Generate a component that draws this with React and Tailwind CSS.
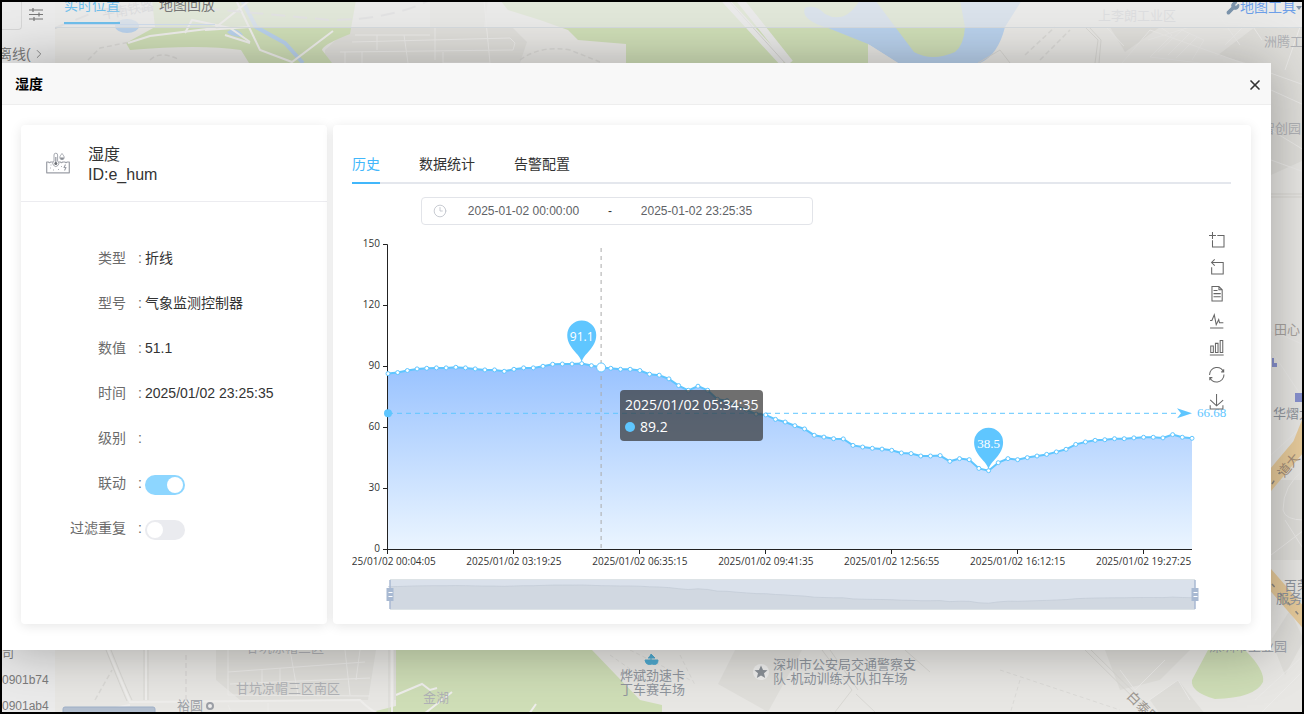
import React, { useState } from 'react';
import { ChevronRight, Clock3, X, Wrench } from 'lucide-react';

const BLUE = '#5fc6ff';

const HISTORY = [
  86.2, 86.7, 87.7, 88.5, 88.8, 89, 89, 89.3, 89, 88.5, 88, 88, 87.3, 88.3, 89, 89, 89.8, 90.8,
  90.9, 90.9, 91.1, 90.1, 89.2, 88.8, 88.3, 88.3, 87.7, 85.9, 85.4, 83.6, 80.3, 78, 80, 78, 73.6,
  72.9, 70.3, 68.3, 66.3, 65.9, 63.7, 62.4, 60.6, 59, 55.9, 55, 54.2, 54.1, 50.9, 50.1, 49.5, 49.1,
  48.5, 47.2, 46.9, 45.7, 45.7, 45.9, 43.1, 44.4, 43.9, 39.6, 38.5, 42.4, 44.4, 43.9, 44.9, 45.7,
  46.5, 47.7, 49, 51.4, 52.6, 53.4, 53.7, 54.2, 54.2, 54.6, 54.9, 54.9, 54.6, 56.2, 54.9, 54.4,
];

const TIME_TICKS = [
  '2025/01/02 00:04:05',
  '2025/01/02 03:19:25',
  '2025/01/02 06:35:15',
  '2025/01/02 09:41:35',
  '2025/01/02 12:56:55',
  '2025/01/02 16:12:15',
  '2025/01/02 19:27:25',
];

const AVERAGE = 66.68;
const ACTIVE = 22;

const TOOLS = [
  { name: '区域缩放', d: 'M0,13.5h26.9 M13.5,26.9V0 M32.1,13.5H58V58H13.5 V32.1' },
  { name: '区域缩放还原', d: 'M22,1.4L9.9,13.5l12.3,12.3 M10.3,13.5H54.9v44.6 H10.3v-26' },
  {
    name: '数据视图',
    d: 'M17.5,17.3H33 M45.4,29.5h-28 M11.5,2v56H51V14.8L38.4,2H11.5z M38.4,2.2v12.7H51 M45.4,41.7h-28',
  },
  { name: '切换为折线图', d: 'M4.1,28.9h7.1l9.3-22l7.4,38l9.7-19.7l3,12.8h14.9M4.1,58h51.4' },
  {
    name: '切换为柱状图',
    d: 'M6.7,22.9h10V48h-10V22.9zM24.9,13h10v35h-10V13zM43.2,2h10v46h-10V2zM3.1,58h53.7',
  },
  {
    name: '还原',
    d: 'M47,18.9h9.8V8.7 M56.3,20.1 C52.1,9,40.5,0.6,26.8,2.1C12.6,3.7,1.6,16.2,2.1,30.6 M13,41.1H3.1v10.2 M3.7,39.9c4.2,11.1,15.8,19.5,29.5,18 c14.2-1.6,25.2-14.1,24.7-28.5',
  },
  {
    name: '保存为图片',
    d: 'M4.7,22.9L29.3,45.5L54.7,23.4M4.6,43.6L4.6,58L53.8,58L53.8,43.6M29.2,45.1L29.2,0',
  },
];

// chart space: plot runs from x 36 to 840, zero line at y 324
const px = (i) => 36 + (i * 804) / (HISTORY.length - 1);
const py = (v) => 324 - v * 2.035;
const sy = (v) => 360 + (91.1 - v) * 0.346;

const toLine = (fy) => HISTORY.map((v, i) => `${px(i).toFixed(1)},${fy(v).toFixed(1)}`).join(' ');

const Pin = ({ index, serif }) => {
  const x = px(index);
  const y = py(HISTORY[index]);
  return (
    <g transform={`translate(${x} ${y})`}>
      <path d="M0 -1C-1.5 -10 -14.5 -15 -14.5 -28.500A14.500 14.500 0 0 1 14.500 -28.500C14.500 -15 1.500 -10 0 -1Z" fill={BLUE} />
      <text
        y="-23"
        textAnchor="middle"
        fill="#fff"
        className={serif ? "text-[13px] font-['Liberation_Serif',serif]" : "text-[12px] font-['Open_Sans',sans-serif]"}
      >
        {HISTORY[index]}
      </text>
    </g>
  );
};

const HistoryChart = () => {
  const line = toLine(py);
  const shadow = toLine(sy);

  return (
    <div className="relative">
      <svg viewBox="0 0 879 392" className="block w-full h-auto font-['Open_Sans',sans-serif]">
        <defs>
          <linearGradient id="humArea" x1="0" y1="0" x2="0" y2="1">
            <stop offset="0" stopColor="#98c2ff" />
            <stop offset="1" stopColor="#ebf5ff" />
          </linearGradient>
        </defs>

        <polygon points={`36,324 ${line} 840,324`} fill="url(#humArea)" />

        {/* Axes */}
        <g stroke="#222" fill="none">
          <path d="M35.500 19.500V324.500H840" />
          {[0, 30, 60, 90, 120, 150].map((v) => (
            <path key={v} d={`M31 ${Math.round(py(v)) + 0.5}h4.500`} />
          ))}
          {TIME_TICKS.map((t, i) => (
            <path key={t} d={`M${Math.round(px(i * 13)) - 0.5} 324v5`} />
          ))}
        </g>
        <g fill="#333" className="text-[10px]">
          {[0, 30, 60, 90, 120, 150].map((v) => (
            <text key={v} x="28" y={py(v) + 3} textAnchor="end">{v}</text>
          ))}
          {TIME_TICKS.map((t, i) => (
            <text key={t} x={px(i * 13)} y="340" textAnchor="middle">{t}</text>
          ))}
        </g>

        <path d={`M${px(ACTIVE)} 23V324`} stroke="#aaa" strokeDasharray="4 4" />

        {/* Series */}
        <polyline points={line} fill="none" stroke={BLUE} strokeWidth="2" />
        {HISTORY.map((v, i) => (
          <circle
            key={i}
            cx={px(i)}
            cy={py(v)}
            r={i === ACTIVE ? 4.5 : 2}
            fill="#fff"
            stroke={BLUE}
            strokeWidth="1"
          />
        ))}

        {/* Average */}
        <path d={`M36 ${py(AVERAGE)}H826`} stroke={BLUE} strokeDasharray="5 4" />
        <circle cx="36" cy={py(AVERAGE)} r="4" fill={BLUE} />
        <path d={`M840 ${py(AVERAGE)}l-15 -5l4 5l-4 5z`} fill={BLUE} />
        <text x="845" y={py(AVERAGE) + 4} fill={BLUE} className="text-[13px] font-['Liberation_Serif',serif]">
          {AVERAGE}
        </text>

        <Pin index={20} />
        <Pin index={62} serif />

        {/* Zoom slider */}
        <rect x="38" y="355" width="805" height="29" fill="#dae1eb" />
        <polygon points={`38,384 38,361.700 ${shadow} 843,372.700 843,384`} fill="#d1d8e1" />
        <polyline points={shadow} fill="none" stroke="#c1cad6" strokeWidth="0.7" />
        <path d="M38 354.500H843M38 384.500H843" stroke="#dde3e6" />
        {[38, 843].map((x) => (
          <g key={x} transform={`translate(${x} 355)`}>
            <path d="M0 0V29" stroke="#a8b9d2" strokeWidth="1.500" />
            <rect x="-3.500" y="8" width="7" height="13" fill="#a8b9d2" />
            <path d="M-1.500 12.500h4M-1.500 16.500h4" stroke="#fff" />
          </g>
        ))}
      </svg>

      {/* Tooltip */}
      <div className="absolute left-[30.5%] top-[42.2%] h-[51px] px-[5px] py-1 rounded bg-[#323232]/70 text-white text-[14px] leading-[22px] whitespace-nowrap font-['Open_Sans',sans-serif]">
        <div>2025/01/02 05:34:35</div>
        <div className="flex items-center gap-[5px]">
          <span className="w-[10px] h-[10px] rounded-full bg-[#5fc6ff]" />
          {HISTORY[ACTIVE]}
        </div>
      </div>

      {/* Toolbox */}
      <div className="absolute right-[7px] top-[7px] flex flex-col gap-3">
        {TOOLS.map((tool) => (
          <button key={tool.name} type="button" aria-label={tool.name} className="block w-[15px] h-[15px]">
            <svg viewBox="0 0 58 58" className="block w-full h-full overflow-visible" fill="none" stroke="#666" strokeWidth="4">
              <path d={tool.d} />
            </svg>
          </button>
        ))}
      </div>
    </div>
  );
};

const Row = ({ label, htmlFor, children }) => (
  <div className="flex items-center h-[45px] text-[14px] leading-5">
    <label htmlFor={htmlFor} className="w-[105px] text-right text-[#6b6b6b]">{label}</label>
    <span className="w-[19px] pl-3 text-[#6b6b6b]">:</span>
    {children}
  </div>
);

const Switch = ({ id, defaultChecked }) => (
  <span className="relative inline-flex w-10 h-5 mt-1">
    <input
      id={id}
      type="checkbox"
      role="switch"
      defaultChecked={defaultChecked}
      className="peer appearance-none w-10 h-5 rounded-full bg-[#eaebef] checked:bg-[#8dd6ff] cursor-pointer"
    />
    <span className="absolute left-0.5 top-0.5 w-4 h-4 rounded-full bg-white pointer-events-none peer-checked:left-[22px]" />
  </span>
);

const DeviceCard = () => (
  <section className="w-[306px] shrink-0 rounded bg-white shadow-[0_2px_12px_rgba(0,0,0,0.1)]">
    <div className="flex items-center h-[77px] pl-[25px] border-b border-[#ececf0]">
      <svg viewBox="0 0 24 22" className="w-6 h-[22px]" fill="none" stroke="#9b9ea6" strokeLinejoin="round">
        <path d="M7 10H4.500C4 11 3 11 2.500 10H0.700V20.800H23.300V10H21C20.500 11 19.500 11 19 10H16.500C16 11 15 11 14.500 10H12.500" strokeWidth="1.200" />
        <path d="M8 9V3a1.800 1.800 0 0 1 3.600 0V9a3 3 0 1 1 -3.600 0Z" strokeWidth="0.900" />
        <path d="M9.800 5V11" strokeWidth="1.300" />
        <circle cx="9.800" cy="11.500" r="1.500" fill="#6d7076" stroke="none" />
        <path d="M16 1.500C17 3 18.200 4 18.200 5.500A2.200 2.200 0 0 1 13.800 5.500C13.800 4 15 3 16 1.500Z" strokeWidth="0.900" />
        <path d="M14 5.500h4a2 2 0 0 1 -4 0Z" fill="#8a8d94" stroke="none" />
        <path d="M19.500 12.500L18 15.500H20L18.500 18.500" strokeWidth="1.100" />
        <path d="M4 16h1M7 18h1M12 17.500h1M15 14.500h1M4.500 13h1" strokeWidth="0.800" />
      </svg>
      <div className="ml-[18px] pt-[3px] text-[16px] leading-5 text-[#333]">
        <h2>湿度</h2>
        <p>ID:e_hum</p>
      </div>
    </div>
    <div className="pt-[33px]">
      <Row label="类型"><span className="text-[#333]">折线</span></Row>
      <Row label="型号"><span className="text-[#333]">气象监测控制器</span></Row>
      <Row label="数值"><span className="text-[#333]">51.1</span></Row>
      <Row label="时间"><span className="text-[#333]">2025/01/02 23:25:35</span></Row>
      <Row label="级别" />
      <Row label="联动" htmlFor="linkage"><Switch id="linkage" defaultChecked /></Row>
      <Row label="过滤重复" htmlFor="dedupe"><Switch id="dedupe" /></Row>
    </div>
  </section>
);

const TABS = ['历史', '数据统计', '告警配置'];

const HistoryCard = () => {
  const [tab, setTab] = useState('历史');
  const [start, setStart] = useState('2025-01-02 00:00:00');
  const [end, setEnd] = useState('2025-01-02 23:25:35');

  return (
    <section className="flex-1 min-w-0 pl-[19px] pr-5 pb-[7px] rounded bg-white shadow-[0_2px_12px_rgba(0,0,0,0.1)]">
      <div role="tablist" className="flex gap-[39px] h-[59px] pt-5 border-b-2 border-[#e4e7ed]">
        {TABS.map((name) => (
          <button
            key={name}
            type="button"
            role="tab"
            aria-selected={tab === name}
            onClick={() => setTab(name)}
            className={
              tab === name
                ? 'h-[39px] text-[14px] leading-5 text-[#41b7fb] border-b-2 border-[#41b7fb]'
                : 'h-[39px] text-[14px] leading-5 text-[#333] border-b-2 border-transparent'
            }
          >
            {name}
          </button>
        ))}
      </div>

      <div className="flex items-center w-[392px] h-7 mt-[13px] ml-[69px] pl-[11px] rounded border border-[#e2e4e9] text-[12px] text-[#606266]">
        <Clock3 size={14} strokeWidth={1.5} className="text-[#c0c4cc]" />
        <input
          aria-label="开始时间"
          value={start}
          onChange={(e) => setStart(e.target.value)}
          className="w-[153px] text-center outline-none"
        />
        <span className="w-5 text-center text-[#333]">-</span>
        <input
          aria-label="结束时间"
          value={end}
          onChange={(e) => setEnd(e.target.value)}
          className="w-[153px] text-center outline-none"
        />
      </div>

      <HistoryChart />
    </section>
  );
};

const CityMap = () => (
  <svg
    viewBox="2 2 1300 710"
    preserveAspectRatio="xMidYMid slice"
    className="absolute inset-0 w-full h-full font-['Noto_Sans_CJK_SC',sans-serif]"
    fill="none"
  >
    <rect x="0" y="0" width="1304" height="714" fill="#e8e7e4" />

    {/* Blocks */}
    <g fill="#e0dfdb">
      <path d="M350 27H512L527 42L520 63H325V50Z" />
      <path d="M430 0H488L484 27H430Z" />
      <path d="M1110 27H1160L1125 52Z" />
      <path d="M1255 27H1304V160L1271 175V70L1218 55Z" />
      <path d="M216 650H376L368 700H240L216 680Z" />
      <path d="M735 650H802L768 712L718 684Z" />
      <path d="M1105 650H1190L1160 680L1120 690Z" />
      <path d="M1150 700L1178 680L1205 714H1160Z" />
      <path d="M1271 480H1304V560H1271Z" />
      <path d="M1271 640L1290 610L1304 640L1285 675Z" />
    </g>

    {/* Parks */}
    <g fill="#cfdeb7">
      <path d="M152 0H356L350 34Q322 45 322 50L332 63H249L241 50Q200 44 130 50L126 43L155 27Z" />
      <path d="M500 0H870V63H626V44L578 40L568 30L540 20L508 10Z" />
      <path d="M396 650H592L640 700L662 705V714H396Z" />
      <path d="M372 712L396 706V714Z" />
      <path d="M1208 650H1245Q1265 670 1263 682Q1255 698 1215 699Q1190 692 1192 680Z" />
    </g>

    {/* Water */}
    <g fill="#b9d1ec">
      <ellipse cx="127" cy="26" rx="12" ry="7" />
      <path d="M227 32Q236 26 243 35L240 37Q230 36 227 32Z" />
      <path d="M805 8Q815 4 825 14Q845 25 860 0H1022L1005 27Q998 55 980 63H898L868 44L828 28Q800 20 805 8Z" />
    </g>
    <path d="M868 44L898 63H868Z" fill="#e8e7e4" />
    <path d="M875 0L914 52Q932 62 955 52Q964 45 965 27L960 0Z" fill="#cfdeb7" />
    <path d="M242 0L256 27L285 43L303 63" stroke="#b9d1ec" strokeWidth="4" />

    {/* Roads */}
    <g stroke="#efeeec" strokeWidth="2">
      <path d="M128 43L150 36L215 28L250 0" />
      <path d="M185 33L192 20L230 28L250 42M236 0L260 50L292 62L333 31" />
      <path d="M205 30L250 27M225 35L250 43" />
      <path d="M396 695L422 684L430 690L437 688M424 714L452 692M529 714L536 704" />
      <path d="M108 650Q125 690 130 702L360 700Q372 712 380 714M146 650V700M392 650V714M130 705Q110 708 104 714" />
    </g>
    <g stroke="#ecebe9" strokeWidth="1">
      <path d="M355 35H430M352 42L510 38L515 43L513 50L340 52M435 27V60M377 35V50M404 35L408 63M484 0L490 63M345 52V63M362 52V63M443 52V63H490" />
      <path d="M228 650V695L370 696M228 672L365 662M230 684L370 678M262 670V684M280 668V684M290 650L298 695M345 650L350 695M360 650L356 680M228 705L232 714M268 703V714" />
      <path d="M1122 63L1150 30L1304 85M1160 27L1172 35L1150 57L1200 63M1148 40L1190 27M1158 52L1182 30L1204 40L1192 60M1168 55L1190 33M1176 58L1197 37" />
      <path d="M1225 45L1245 25M1235 0L1262 40M1270 0L1300 27L1285 70M1107 28L1124 46M1215 10L1240 45" />
      <path d="M1271 90L1304 105M1271 130L1304 150M1271 160L1304 172M1271 455L1304 425M1285 520L1304 550" />
      <path d="M1271 330L1304 345M1271 350L1304 400M1304 470Q1283 485 1283 510Q1285 520 1304 520M1271 555L1304 530" />
      <path d="M1260 714L1304 670M1255 700L1304 655M1145 703L1178 680L1190 700M1120 670L1135 690L1165 660" />
    </g>
    <g stroke="#d9d8d4" strokeWidth="1">
      <path d="M1085 27L1098 40L1095 63M1089 27L1101 40L1099 63M978 63L1000 50L1010 63" />
      <path d="M822 650L852 690L835 712M856 694L875 712M830 650L858 690M905 650L930 672M1085 650L1150 714M1091 650L1156 714" />
      <path d="M106 650Q122 690 127 701M111 650Q127 690 132 700M144 650V700M148 650V700M389 650V714M395 650V700" />
    </g>
    <path d="M725 0L783 63M740 0L790 63" stroke="#e9e9e8" strokeWidth="7" />
    <path d="M728 0L785 63" stroke="#d4d3d0" strokeWidth="1" />
    <path d="M55 28L100 10L200 8L330 20Q390 20 430 0" stroke="#d2d2d4" strokeWidth="2" strokeDasharray="14 8" />
    <path d="M88 60L100 48L130 42M150 60Q160 50 180 60M520 60Q540 45 570 50L600 62M1025 55L1055 27M1040 60L1070 30M95 700L112 670M186 655V700" stroke="#dad9d6" strokeWidth="1.500" strokeDasharray="5 3" />
    <path d="M610 655L660 690M630 650L690 680M680 655L695 685" stroke="#dcdbd8" strokeWidth="1" strokeDasharray="4 3" />
    <path d="M1000 670L1120 710M1020 680L1010 714" stroke="#dcdbd8" strokeWidth="1" strokeDasharray="4 3" />
    <path d="M1271 194H1304M1271 197H1304" stroke="#d9d7d2" strokeWidth="1" />
    <path d="M1262 490L1300 445L1310 420M1262 570L1310 625" stroke="#e8cc9c" strokeWidth="15" />
    <path d="M1272 484L1280 472M1272 584L1310 628" stroke="#8d8a85" strokeWidth="1.500" strokeDasharray="4 8" />

    {/* Places */}
    <g fill="#b0b2b6" className="text-[13px]">
      <text x="1098" y="20" fill="#c4c6ca">上李朗工业区</text>
      <text x="1264" y="46">洲腾工</text>
      <text x="1262" y="133">智创园</text>
      <text x="1274" y="334" fill="#a8a4a0">田心</text>
      <text x="1273" y="418" fill="#8f959d">华熠大厦</text>
      <text x="1284" y="590" fill="#8f959d">百荣</text>
      <text x="1276" y="603" fill="#8f959d">服务区</text>
      <text x="1209" y="651" fill="#9da2aa">深圳市工业园</text>
      <text x="246" y="652">甘坑凉帽三区</text>
      <text x="236" y="693">甘坑凉帽三区南区</text>
      <text x="423" y="702">金湖</text>
      <text x="177" y="710" fill="#9b9fa6">裕圆</text>
      <text x="1284" y="478" transform="rotate(-50 1284 478)" fill="#a58f78">道大</text>
      <text x="1126" y="697" transform="rotate(45 1126 697)" fill="#9c9690">白泰路</text>
      <text x="103" y="19" transform="rotate(-10 103 19)" fill="#bfc1c6">平南铁路</text>
    </g>
    <g fill="#8f959d" className="text-[13px]">
      <text x="620" y="680">烨斌劲速卡</text>
      <text x="620" y="694">丁车赛车场</text>
      <text x="773" y="669">深圳市公安局交通警察支</text>
      <text x="773" y="683">队-机动训练大队扣车场</text>
    </g>
    <circle cx="210" cy="706" r="3" stroke="#9b9fa6" strokeWidth="2" fill="#eee" />
    <circle cx="761" cy="672" r="8" fill="#efefee" />
    <path d="M761 665.500L763 670L767.500 670.300L764 673.300L765.200 678L761 675.500L756.800 678L758 673.300L754.500 670.300L759 670Z" fill="#8a9097" />
    <path d="M645 660H658Q658 666 652 664Q646 666 645 660ZM651 654V660M651 654L655 658H648" fill="#4fa9cf" stroke="#4fa9cf" />
    <path d="M1272 358v9h5v-4h-3v-5zM1295 393h9v9h-9z" fill="#8891cf" />
    <rect x="63" y="707" width="92" height="12" rx="2" fill="#b3bfcf" stroke="#9fb0c8" />
  </svg>
);

const MonitorPage = () => (
  <div className="absolute inset-0 overflow-hidden">
    <CityMap />
    <div className="relative flex h-full">
      <aside className="flex flex-col justify-between w-[53px] shrink-0 overflow-hidden bg-[#ebebeb] text-[14px] leading-5 text-[#7b7b7b]">
        <div>
          <div className="flex items-start gap-[7px]">
            <div className="w-5 h-7 rounded-br border-r border-b border-[#d6d6d6]" />
            <button type="button" aria-label="筛选" className="mt-[6px]">
              <svg viewBox="0 0 14 13" className="block w-[14px] h-[13px]" fill="none" stroke="#777" strokeWidth="1.200">
                <path d="M0 2H14M0 6.500H14M0 11H14M4 0V4M10 4.500V8.500M5 9V13" />
              </svg>
            </button>
          </div>
          <div className="flex items-center mt-[14px] -ml-1">
            <span className="w-7 whitespace-nowrap">离线(</span>
            <ChevronRight size={14} strokeWidth={1.5} className="ml-[6px]" />
          </div>
        </div>
        <ul className="-mb-[7px] text-[12px] leading-[26px] whitespace-nowrap">
          <li>司</li>
          <li>0901b74</li>
          <li>0901ab4</li>
        </ul>
      </aside>
      <div className="flex-1 min-w-0">
        <header className="flex items-end justify-between h-10 -mt-[14px] pl-[9px] border-b border-[#d5dbdf] bg-[#ebebeb]/65 text-[14px]">
          <nav className="flex gap-[39px] mb-0.5 border-b border-[#d0dcec]">
            <a href="#live" className="pb-[6px] text-[#6fbfec] border-b-2 border-[#6fbfec]">实时位置</a>
            <a href="#replay" className="pb-2 text-[#777]">地图回放</a>
          </nav>
          <a href="#tools" className="flex items-center pb-[9px] text-[#6d9fe8]">
            <Wrench size={14} className="text-[#7b93ab] fill-[#7b93ab]" />
            地图工具
            <span className="border-x-3 border-t-4 border-x-transparent border-t-[#8294a8]" />
          </a>
        </header>
      </div>
    </div>
  </div>
);

export default function App() {
  return (
    <div className="relative min-h-screen overflow-hidden border-2 border-black font-['Liberation_Sans','Noto_Sans_CJK_SC',sans-serif]">
      <MonitorPage />

      <div
        role="dialog"
        aria-labelledby="dialog-title"
        className="relative mt-[61px] mr-[31px] mb-[60px] bg-white shadow-[1px_1px_50px_rgba(0,0,0,0.3)]"
      >
        <div className="flex items-center justify-between h-[42px] pt-0.5 pl-[13px] pr-2 border-b border-[#eee] bg-[#f8f8f8]">
          <h1 id="dialog-title" className="text-[14px] font-bold text-black">湿度</h1>
          <button type="button" aria-label="关闭">
            <X size={16} strokeWidth={2.5} className="text-[#333]" />
          </button>
        </div>
        <div className="flex gap-[6px] pt-5 pr-5 pb-[26px] pl-[19px]">
          <DeviceCard />
          <HistoryCard />
        </div>
      </div>
    </div>
  );
}
